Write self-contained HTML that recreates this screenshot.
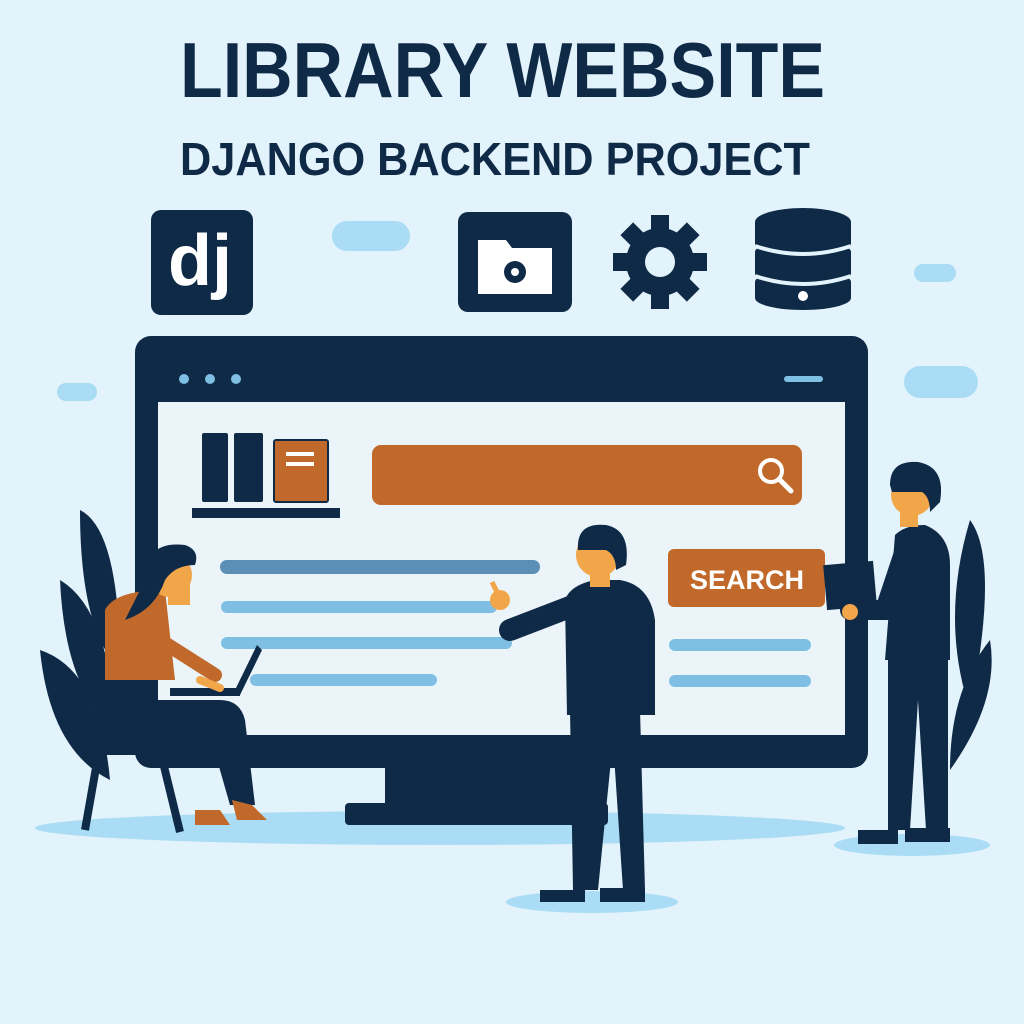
<!DOCTYPE html>
<html><head><meta charset="utf-8"><style>
html,body{margin:0;padding:0;background:#e3f3fb;}
svg{display:block}
</style></head><body>
<svg width="1024" height="1024" viewBox="0 0 1024 1024" xmlns="http://www.w3.org/2000/svg">
<rect width="1024" height="1024" fill="#e3f3fb"/>
<text x="180" y="97" textLength="645" lengthAdjust="spacingAndGlyphs" font-family="Liberation Sans, sans-serif" font-weight="bold" font-size="78" fill="#0f2a47">LIBRARY WEBSITE</text>
<text x="180" y="175" textLength="630" lengthAdjust="spacingAndGlyphs" font-family="Liberation Sans, sans-serif" font-weight="bold" font-size="46" fill="#0f2a47">DJANGO BACKEND PROJECT</text>
<!-- clouds -->
<rect x="332" y="221" width="78" height="30" rx="15" fill="#aadcf5"/>
<rect x="914" y="264" width="42" height="18" rx="9" fill="#aadcf5"/>
<rect x="57" y="383" width="40" height="18" rx="9" fill="#aadcf5"/>
<rect x="904" y="366" width="74" height="32" rx="16" fill="#aadcf5"/>
<!-- dj -->
<rect x="151" y="210" width="102" height="105" rx="10" fill="#0f2a47"/>
<text x="200" y="285" text-anchor="middle" font-family="Liberation Sans, sans-serif" font-weight="bold" font-size="72" fill="#fff">dj</text>
<!-- folder -->
<rect x="458" y="212" width="114" height="100" rx="10" fill="#0f2a47"/>
<path d="M478 240h28l6 8h40v46h-74z" fill="#fff"/>
<circle cx="515" cy="272" r="11" fill="#0f2a47"/><circle cx="515" cy="272" r="4" fill="#fff"/>
<!-- gear -->
<g transform="translate(660,262)" fill="#0f2a47">
<circle r="34"/>
<g id="t"><rect x="-9" y="-47" width="18" height="18"/></g>
<use href="#t" transform="rotate(45)"/><use href="#t" transform="rotate(90)"/><use href="#t" transform="rotate(135)"/>
<use href="#t" transform="rotate(180)"/><use href="#t" transform="rotate(225)"/><use href="#t" transform="rotate(270)"/><use href="#t" transform="rotate(315)"/>
<circle r="15" fill="#e3f3fb"/>
</g>
<!-- db -->
<g fill="#0f2a47">
<ellipse cx="803" cy="222" rx="48" ry="14"/>
<rect x="755" y="222" width="96" height="24"/>
<ellipse cx="803" cy="252" rx="48" ry="12"/>
<rect x="755" y="252" width="96" height="24"/>
<ellipse cx="803" cy="282" rx="48" ry="12"/>
<rect x="755" y="282" width="96" height="16"/>
<ellipse cx="803" cy="298" rx="48" ry="12"/>
</g>
<path d="M755 246q48 16 96 0M755 276q48 16 96 0" stroke="#e3f3fb" stroke-width="4" fill="none"/>
<circle cx="803" cy="296" r="5" fill="#fff"/>
<!-- floor shadows -->
<ellipse cx="440" cy="828" rx="405" ry="17" fill="#aadcf5"/>
<ellipse cx="592" cy="902" rx="86" ry="11" fill="#aadcf5"/>
<ellipse cx="912" cy="845" rx="78" ry="11" fill="#aadcf5"/>
<!-- plants -->
<g fill="#0f2a47">
<path d="M80 510q40 20 40 160q-40-40-40-160z"/>
<path d="M60 580q50 30 55 150q-50-40-55-150z"/>
<path d="M40 650q60 20 70 130q-60-30-70-130z"/>
<path d="M970 520q30 40 0 190q-30-90 0-190z"/>
<path d="M990 640q10 60-40 130q0-80 40-130z"/>
</g>
<!-- monitor -->
<rect x="385" y="765" width="205" height="43" fill="#0f2a47"/>
<rect x="345" y="803" width="263" height="22" rx="4" fill="#0f2a47"/>
<rect x="135" y="336" width="733" height="432" rx="16" fill="#0f2a47"/>
<rect x="158" y="358" width="687" height="377" fill="#eaf4f9"/>
<rect x="158" y="358" width="687" height="44" fill="#0f2a47"/>
<circle cx="184" cy="379" r="5" fill="#7fbfe3"/><circle cx="210" cy="379" r="5" fill="#7fbfe3"/><circle cx="236" cy="379" r="5" fill="#7fbfe3"/>
<rect x="784" y="376" width="39" height="6" rx="3" fill="#7fbfe3"/>
<!-- shelf -->
<rect x="202" y="433" width="26" height="69" rx="2" fill="#0f2a47"/>
<rect x="234" y="433" width="29" height="69" rx="2" fill="#0f2a47"/>
<rect x="274" y="440" width="54" height="62" rx="2" fill="#c0692a" stroke="#0f2a47" stroke-width="2"/>
<rect x="286" y="452" width="28" height="4" fill="#fff"/><rect x="286" y="462" width="28" height="4" fill="#fff"/>
<rect x="192" y="508" width="148" height="10" fill="#0f2a47"/>
<!-- search bar -->
<rect x="372" y="445" width="430" height="60" rx="9" fill="#c0692a"/>
<circle cx="771" cy="471" r="11" fill="none" stroke="#fff" stroke-width="4"/>
<path d="M779 479l12 12" stroke="#fff" stroke-width="5" stroke-linecap="round"/>
<!-- lines -->
<g stroke-linecap="round">
<path d="M227 567h306" stroke="#5b8fb5" stroke-width="14"/>
<path d="M227 607h264" stroke="#7fbfe3" stroke-width="12"/>
<path d="M227 643h279" stroke="#7fbfe3" stroke-width="12"/>
<path d="M256 680h175" stroke="#7fbfe3" stroke-width="12"/>
<path d="M675 645h130" stroke="#7fbfe3" stroke-width="12"/>
<path d="M675 681h130" stroke="#7fbfe3" stroke-width="12"/>
</g>
<rect x="668" y="549" width="157" height="58" rx="6" fill="#c0692a"/>
<text x="747" y="589" text-anchor="middle" font-family="Liberation Sans, sans-serif" font-weight="bold" font-size="27" fill="#fff">SEARCH</text>
<!-- woman -->
<g>
<path d="M95 665h50v90h-40q-10 0-10-10z" fill="#0f2a47"/>
<path d="M100 745l-15 85M160 750l20 82" stroke="#0f2a47" stroke-width="8"/>
<path d="M100 700h120q20 0 25 20l10 85h-25l-20-70h-110z" fill="#0f2a47"/>
<path d="M195 810l25 0 10 15h-35zM232 800l20 5 15 15h-30z" fill="#c0692a"/>
<path d="M105 610q10-20 60-20l10 90h-70z" fill="#c0692a"/>
<path d="M160 640l55 35" stroke="#c0692a" stroke-width="14" stroke-linecap="round"/>
<path d="M168 580h22v25h-22z" fill="#f2a64a"/>
<circle cx="170" cy="575" r="22" fill="#f2a64a"/>
<path d="M145 580q0-40 40-35q15 5 10 20q-20 0-30 15q-10 30-40 40q10-20 20-40z" fill="#0f2a47"/>
<path d="M235 690l22-45 5 5-22 45z" fill="#0f2a47"/>
<rect x="170" y="688" width="70" height="8" fill="#0f2a47"/>
<path d="M200 680l20 8" stroke="#f2a64a" stroke-width="8" stroke-linecap="round"/>
</g>
<!-- man center -->
<g>
<path d="M570 710h70l5 180h-22l-10-150-15 150h-25z" fill="#0f2a47"/>
<path d="M540 890h45v12h-45zM600 888h45v14h-45z" fill="#0f2a47"/>
<path d="M565 600q5-15 30-20h25q30 5 35 40v95h-88z" fill="#0f2a47"/>
<path d="M575 605l-65 25" stroke="#0f2a47" stroke-width="22" stroke-linecap="round"/>
<circle cx="500" cy="600" r="10" fill="#f2a64a"/>
<path d="M492 582l8 16" stroke="#f2a64a" stroke-width="5"/>
<rect x="590" y="565" width="20" height="22" fill="#f2a64a"/>
<circle cx="598" cy="555" r="22" fill="#f2a64a"/>
<path d="M578 550q-2-28 28-25q25 5 20 40l-10 5q0-15-10-20h-25z" fill="#0f2a47"/>
</g>
<!-- man right -->
<g>
<path d="M888 655h60l0 175h-22l-8-130-8 130h-22z" fill="#0f2a47"/>
<path d="M858 830h40v14h-40zM905 828h45v14h-45z" fill="#0f2a47"/>
<path d="M895 535q10-10 30-10q25 10 25 40v95h-65z" fill="#0f2a47"/>
<path d="M905 550l-20 60h-35" stroke="#0f2a47" stroke-width="20" stroke-linecap="round" fill="none"/>
<rect x="825" y="563" width="50" height="45" fill="#0f2a47" transform="rotate(-5 850 585)"/>
<circle cx="850" cy="612" r="8" fill="#f2a64a"/>
<rect x="900" y="505" width="18" height="22" fill="#f2a64a"/>
<circle cx="912" cy="495" r="21" fill="#f2a64a"/>
<path d="M890 485q0-25 28-23q28 5 22 40l-10 10q0-15-8-20h-30z" fill="#0f2a47"/>
</g>
</svg>
</body></html>
